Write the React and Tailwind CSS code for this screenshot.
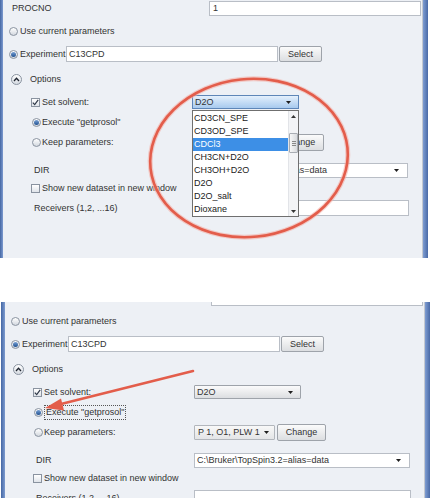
import React from "react";

const F = { fontFamily: '"Liberation Sans", Arial, Helvetica, sans-serif' };

function Radio({ on }) {
  return (
    <span className="flex h-[9px] w-[9px] shrink-0 items-center justify-center rounded-full border border-[#8a93a0] bg-linear-to-b from-[#ffffff] to-[#d3d8df]">
      {on && <span className="h-[5px] w-[5px] rounded-full bg-linear-to-b from-[#7aa3d6] to-[#1f4f8f]" />}
    </span>
  );
}

function Check({ on }) {
  return (
    <span className="flex h-[9px] w-[9px] shrink-0 items-center justify-center border border-[#8a93a0] bg-linear-to-b from-white to-[#e0e4ea]">
      {on && (
        <svg width="7" height="7" viewBox="0 0 7 7">
          <path d="M0.8 3.6 L2.7 5.6 L6.2 0.9" stroke="#2f3848" strokeWidth="1.2" fill="none" />
        </svg>
      )}
    </span>
  );
}

function Tri() {
  return (
    <svg width="5" height="3" viewBox="0 0 5 3" className="shrink-0">
      <path d="M0 0h5L2.5 3z" fill="#1e1e1e" />
    </svg>
  );
}

function OptIcon() {
  return (
    <span className="flex h-[11px] w-[11px] shrink-0 items-center justify-center rounded-full border border-[#8a93a0] bg-linear-to-b from-white to-[#d5dae1]">
      <svg width="7" height="5" viewBox="0 0 7 5">
        <path d="M1 4 L3.5 1.3 L6 4" stroke="#1f2530" strokeWidth="1.3" fill="none" />
      </svg>
    </span>
  );
}

function Form({ bottom }) {
  return (
    <div className="flex flex-col text-[9px] leading-none text-[#333]">
      <div className="flex h-[18px] items-center pl-[9px]">
        <span className="w-[197px]">PROCNO</span>
        <div className="flex h-[15px] w-[212px] items-center border border-[#b9bec6] bg-white pl-[3px]">1</div>
      </div>
      <div className="flex h-[28px] items-center pl-[6px]">
        <Radio />
        <span className="ml-[2px]">Use current parameters</span>
      </div>
      <div className="flex h-[18px] items-center pl-[6px]">
        <Radio on />
        <span className="ml-[2px] w-[45px]">Experiment</span>
        <div className="ml-[1px] flex h-[16px] w-[212px] items-center border border-[#b9bec6] bg-white pl-[2px]">C13CPD</div>
        <div className="ml-[1px] flex h-[16px] w-[43px] items-center justify-center rounded-[2px] border border-[#9ea3aa] bg-linear-to-b from-[#fbfbfb] to-[#dcdee1]">Select</div>
      </div>
      <div className="flex h-[32px] items-center pl-[8px]">
        <OptIcon />
        <span className="ml-[8px]">Options</span>
      </div>
      <div className="flex h-[14px] items-center pl-[28px]">
        <Check on />
        <span className="ml-[2px] w-[150px]">Set solvent:</span>
        {bottom ? (
          <div className="flex h-[14px] w-[107px] items-center justify-between rounded-[1px] border border-[#9ea3aa] bg-linear-to-b from-[#fbfbfb] to-[#dcdee1] pl-[2px] pr-[7px]">
            <span>D2O</span>
            <Tri />
          </div>
        ) : (
          <div className="flex h-[14px] w-[107px] items-center justify-between border border-[#5e86b8] bg-linear-to-b from-[#e4f0fc] to-[#a8caee] pl-[2px] pr-[7px]">
            <span>D2O</span>
            <Tri />
          </div>
        )}
      </div>
      <div className="flex h-[26px] items-center pl-[29px]">
        <Radio on />
        {bottom ? (
          <span className="ml-[1px] border border-dotted border-[#555] px-[1px] py-[2px]">Execute "getprosol"</span>
        ) : (
          <span className="ml-[1px]">Execute "getprosol"</span>
        )}
      </div>
      <div className="flex h-[14px] items-center pl-[29px]">
        <Radio />
        <span className="ml-[1px] w-[150px]">Keep parameters:</span>
        <div className="flex h-[15px] w-[81px] items-center justify-between rounded-[1px] border border-[#b2b6bc] bg-linear-to-b from-[#f8f8f8] to-[#e4e5e7] pl-[3px] pr-[5px]">
          <span>P 1, O1, PLW 1</span>
          <Tri />
        </div>
        <div className="ml-[2px] flex h-[17px] w-[49px] items-center justify-center rounded-[2px] border border-[#9ea3aa] bg-linear-to-b from-[#fbfbfb] to-[#dcdee1]">Change</div>
      </div>
      <div className="mt-[10px] flex h-[22px] items-center pl-[31px]">
        <span className="w-[158px]">DIR</span>
        <div className="flex h-[15px] w-[216px] items-center justify-between border border-[#b9bec6] bg-white pl-[2px] pr-[8px]">
          <span>C:\Bruker\TopSpin3.2=alias=data</span>
          <Tri />
        </div>
      </div>
      <div className="flex h-[15px] items-center pl-[28px]">
        <Check />
        <span className="ml-[2px]">Show new dataset in new window</span>
      </div>
      <div className="flex h-[24px] items-center pl-[31px]">
        <span className="w-[158px]">Receivers (1,2, ...16)</span>
        <div className="h-[16px] w-[217px] border border-[#b9bec6] bg-white" />
      </div>
    </div>
  );
}

const ITEMS = ["CD3CN_SPE", "CD3OD_SPE", "CDCl3", "CH3CN+D2O", "CH3OH+D2O", "D2O", "D2O_salt", "Dioxane"];

function DropList() {
  return (
    <div className="absolute left-[189px] top-[110px] flex w-[107px] border border-[#6f6f6f] bg-white text-[9px] leading-none text-[#222]">
      <div className="flex flex-1 flex-col pt-[1px]">
        {ITEMS.map((t) =>
          t === "CDCl3" ? (
            <div key={t} className="flex h-[13px] items-center bg-[#3d8fe6] pl-[1px] text-white">{t}</div>
          ) : (
            <div key={t} className="flex h-[13px] items-center pl-[1px]">{t}</div>
          )
        )}
      </div>
      <div className="flex w-[10px] flex-col items-center border-l border-[#e2e4e8] bg-[#f3f4f6]">
        <div className="flex h-[10px] items-center justify-center">
          <svg width="5" height="3" viewBox="0 0 5 3"><path d="M0 3h5L2.5 0z" fill="#333" /></svg>
        </div>
        <div className="mt-[12px] flex h-[20px] w-[9px] flex-col items-center justify-center gap-[1px] rounded-[1px] border border-[#a9adb3] bg-linear-to-r from-[#f7f7f7] to-[#d9dbde]">
          <span className="h-px w-[4px] bg-[#888]" />
          <span className="h-px w-[4px] bg-[#888]" />
          <span className="h-px w-[4px] bg-[#888]" />
        </div>
        <div className="flex-1" />
        <div className="flex h-[10px] items-center justify-center">
          <svg width="5" height="3" viewBox="0 0 5 3"><path d="M0 0h5L2.5 3z" fill="#333" /></svg>
        </div>
      </div>
    </div>
  );
}

export default function App() {
  return (
    <div className="h-[498px] w-[432px] overflow-hidden bg-white" style={F}>
      {/* top screenshot */}
      <div className="relative flex h-[258px] w-[428px]">
        <div className="w-[3px] bg-linear-to-r from-[#4567a3] to-[#7d9bd0]" />
        <div className="relative flex-1 bg-[#edf0f5]">
          <div className="-mt-px">
            <Form />
          </div>
          <DropList />
        </div>
        <div className="w-px bg-[#c3c8d0]" />
        <div className="w-[5px] bg-linear-to-r from-[#7f9dd2] to-[#4a6aa6]" />
        <svg className="pointer-events-none absolute left-0 top-0" width="428" height="258" viewBox="0 0 428 258">
          <ellipse cx="249" cy="158" rx="99" ry="79" transform="rotate(-6 249 158)" fill="none" stroke="#f3b1a8" strokeWidth="5" opacity="0.6" />
          <ellipse cx="249" cy="158" rx="99" ry="79" transform="rotate(-6 249 158)" fill="none" stroke="#e35d4b" strokeWidth="2.6" />
        </svg>
      </div>

      <div className="h-[44px]" />

      {/* bottom screenshot */}
      <div className="relative ml-px flex h-[196px] w-[429px] overflow-hidden">
        <div className="w-[4px] bg-linear-to-r from-[#4567a3] to-[#7d9bd0]" />
        <div className="relative flex-1 overflow-hidden bg-[#edf0f5]">
          <div className="-mt-[13px]">
            <Form bottom />
          </div>
        </div>
        <div className="w-px bg-[#c3c8d0]" />
        <div className="w-[5px] bg-linear-to-r from-[#7f9dd2] to-[#4a6aa6]" />
        <svg className="pointer-events-none absolute left-0 top-0" width="429" height="196" viewBox="0 0 429 196">
          <line x1="192" y1="69" x2="58" y2="102.5" stroke="#e35d4b" strokeWidth="2.6" strokeLinecap="round" />
          <path d="M44 106 L60 96.5 L63 108.5 Z" fill="#e35d4b" />
        </svg>
      </div>
    </div>
  );
}
